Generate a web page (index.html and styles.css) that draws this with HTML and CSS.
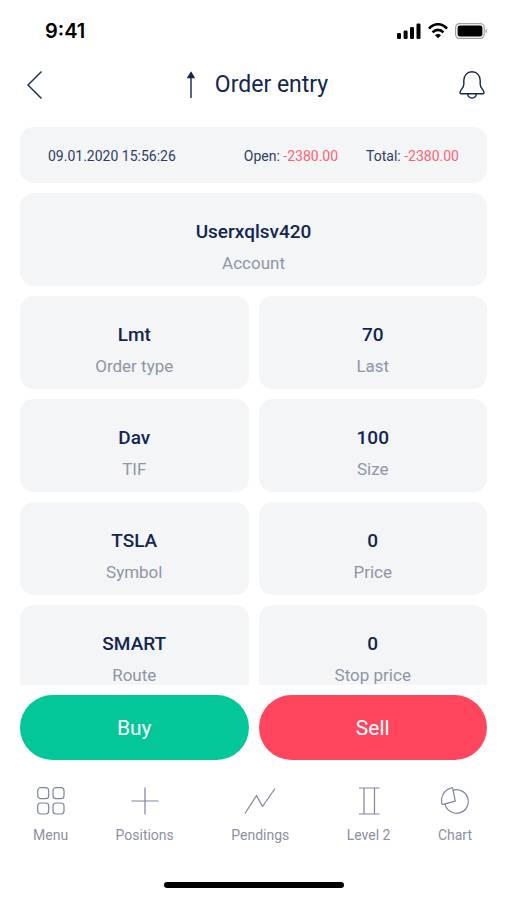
FILE: index.html
```html
<!DOCTYPE html>
<html lang="en">
<head>
<meta charset="utf-8">
<meta name="viewport" content="width=device-width, initial-scale=1">
<title>Order entry</title>
<link rel="stylesheet" href="styles.css">
</head>
<body>
<div class="app">
  <div class="status">
    <span class="status-time">9:41</span>
    <div class="status-icons">
      <svg width="24" height="16" viewBox="0 0 24 16"><rect x="0" y="10" width="4" height="6" rx="1.3"/><rect x="6.6" y="7.4" width="4" height="8.600" rx="1.300"/><rect x="13" y="4" width="4" height="12" rx="1.300"/><rect x="19.500" y="0.500" width="4" height="15.500" rx="1.300"/></svg>
      <svg width="20" height="16" viewBox="0 0 20 16" fill="none" stroke="#000" stroke-width="2.600"><path d="M1 5.600C6-.2 14-.2 19 5.600"/><path d="M4.600 9.300C7.600 6 12.400 6 15.400 9.300"/><path d="M7 12.300C8.800 10.600 11.200 10.600 13 12.300L10 15.200Z" fill="#000" stroke="none"/></svg>
      <svg width="32" height="16" viewBox="0 0 32 16"><rect x=".6" y=".6" width="28.600" height="14.800" rx="4" fill="none" stroke="#a2a2a2" stroke-width="1.200"/><rect x="2.600" y="2.600" width="24.800" height="10.800" rx="2.200"/><path d="M30.600 5.400Q32 6.300 32 8T30.600 10.600Z" fill="#a2a2a2"/></svg>
    </div>
  </div>
  <header class="header">
    <button class="icon-button back" type="button" aria-label="Back"><svg width="30" height="30" viewBox="0 0 30 30"><path d="M21.500 1.500 8 15 21.500 28.500"/></svg></button>
    <h1 class="title"><svg width="24" height="28" viewBox="0 0 24 28"><path d="M12 3V27"/><path class="solid" d="M12 1.500 15 6.500H9Z"/></svg>Order entry</h1>
    <button class="icon-button bell" type="button" aria-label="Notifications"><svg width="30" height="30" viewBox="0 0 30 30"><path d="M15 1.800C9.800 1.800 6.800 5.700 6.800 10.500V14.500C6.800 18 3 20 3 22.700Q3 23.700 4.200 23.700H25.800Q27 23.700 27 22.700C27 20 23.200 18 23.200 14.500V10.500C23.200 5.700 20.200 1.800 15 1.800Z"/><path d="M10.600 24C11 26.500 12.500 28 15 28S19 26.500 19.400 24"/></svg></button>
  </header>
  <main class="content">
    <section class="summary">
      <time datetime="2020-01-09T15:56:26">09.01.2020 15:56:26</time>
      <span class="total">Open: <b class="loss">-2380.00</b></span>
      <span>Total: <b class="loss">-2380.00</b></span>
    </section>
    <div class="fields">
      <button type="button" class="field wide"><span class="value">Userxqlsv420</span><span class="label">Account</span></button>
      <button type="button" class="field"><span class="value">Lmt</span><span class="label">Order type</span></button>
      <button type="button" class="field"><span class="value">70</span><span class="label">Last</span></button>
      <button type="button" class="field"><span class="value">Dav</span><span class="label">TIF</span></button>
      <button type="button" class="field"><span class="value">100</span><span class="label">Size</span></button>
      <button type="button" class="field"><span class="value">TSLA</span><span class="label">Symbol</span></button>
      <button type="button" class="field"><span class="value">0</span><span class="label">Price</span></button>
      <button type="button" class="field"><span class="value">SMART</span><span class="label">Route</span></button>
      <button type="button" class="field"><span class="value">0</span><span class="label">Stop price</span></button>
    </div>
  </main>
  <div class="actions">
    <button type="button" class="action buy">Buy</button>
    <button type="button" class="action sell">Sell</button>
  </div>
  <nav class="tabs">
    <a class="tab" href="#menu"><svg width="30" height="30" viewBox="0 0 30 30"><rect x="1.700" y="1.700" width="11" height="11" rx="3"/><rect x="17" y="1.700" width="11" height="11" rx="3"/><rect x="1.700" y="17" width="11" height="11" rx="3"/><rect x="17" y="17" width="11" height="11" rx="3"/></svg>Menu</a>
    <a class="tab" href="#positions"><svg width="30" height="30" viewBox="0 0 30 30"><path d="M15 1.500V28.500M1.500 15H28.500"/></svg>Positions</a>
    <a class="tab tab-middle" href="#pendings"><svg width="32" height="30" viewBox="0 0 32 30"><path d="M1 27.500 12.500 9.500 18.500 20.500 31 2.500"/></svg>Pendings</a>
    <a class="tab" href="#level2"><svg width="30" height="30" viewBox="0 0 30 30"><path d="M5 2H25.500M5 28H25.500M10 2V28M20.500 2V28"/></svg>Level 2</a>
    <a class="tab" href="#chart"><svg width="30" height="30" viewBox="0 0 30 30"><path d="M13 4.200A11.800 11.800 0 1 1 5 18.200"/><path d="M11.500 1.700Q2.500 4.500 1.500 13.500L1.800 17.300Q2 18.600 3.300 18.300L15.300 15.200 12.800 2.700Q12.500 1.400 11.500 1.700Z"/></svg>Chart</a>
  </nav>
  <div class="home-indicator"></div>
</div>
</body>
</html>
```
FILE: styles.css
```css
* {
  box-sizing: border-box;
}

body {
  margin: 0;
  background: #fff;
  color: #142550;
  font-family: Roboto, "Liberation Sans", sans-serif;
}

button {
  border: 0;
  padding: 0;
  background: none;
  color: inherit;
  font: inherit;
  cursor: pointer;
}

svg {
  display: block;
}

.app {
  display: flex;
  flex-direction: column;
  height: 100vh;
}

.status {
  display: flex;
  align-items: center;
  justify-content: space-between;
  padding: 19px 20px 0 45px;
  color: #000;
}

.status-time {
  font: 600 20px/24px Inter, sans-serif;
}

.status-icons {
  display: flex;
  gap: 7px;
}

.header {
  display: grid;
  grid-template-columns: 1fr auto 1fr;
  align-items: center;
  padding: 24px 20px 0;
}

.header svg {
  fill: none;
  stroke: #142550;
  stroke-width: 1.4;
}

.header .solid {
  fill: #142550;
}

.icon-button.bell {
  justify-self: end;
}

.icon-button.back {
  justify-self: start;
}

.title {
  display: flex;
  align-items: center;
  gap: 12px;
  margin: 0;
  font-size: 23px;
  line-height: 36px;
  font-weight: 400;
}

.content {
  flex: 1;
  min-height: 0;
  overflow: hidden;
  padding: 0 20px;
  margin-top: 24px;
}

.summary {
  display: flex;
  align-items: center;
  gap: 28px;
  height: 56px;
  padding: 2px 28px 0;
  border-radius: 14px;
  background: #f3f5f7;
  color: #2f3d63;
  font-size: 14px;
}

.total {
  margin-left: auto;
}

.loss {
  color: #ff5f76;
  font-weight: 400;
}

.fields {
  display: grid;
  grid-template-columns: 1fr 1fr;
  gap: 10px;
  margin-top: 10px;
}

.field {
  display: flex;
  flex-direction: column;
  align-items: center;
  gap: 7px;
  padding: 27px 0 18px;
  border-radius: 14px;
  background: #f3f5f7;
  line-height: 24px;
}

.wide {
  grid-column: 1 / -1;
}

.value {
  font-size: 19px;
  font-weight: 500;
}

.label {
  height: 17px;
  color: #8f95a8;
  font-size: 17px;
}

.actions {
  display: grid;
  grid-template-columns: 1fr 1fr;
  gap: 10px;
  padding: 10px 20px 0;
}

.action {
  height: 65px;
  border-radius: 33px;
  color: #fff;
  font-size: 21px;
}

.buy {
  background: #04c799;
}

.sell {
  background: #ff465e;
}

.tabs {
  display: flex;
  justify-content: space-between;
  padding: 26px 35px 0 33px;
}

.tab {
  display: flex;
  flex-direction: column;
  align-items: center;
  gap: 9px;
  color: #8b90a5;
  font-size: 14px;
  line-height: 20px;
  text-decoration: none;
}

.tab-middle {
  padding: 0 10px;
}

.tab svg {
  fill: none;
  stroke: #7f84a0;
  stroke-width: 1.2;
  stroke-linejoin: round;
}

.home-indicator {
  align-self: center;
  width: 180px;
  height: 6px;
  margin: 37px 0 12px;
  border-radius: 3px;
  background: #000;
}
```
